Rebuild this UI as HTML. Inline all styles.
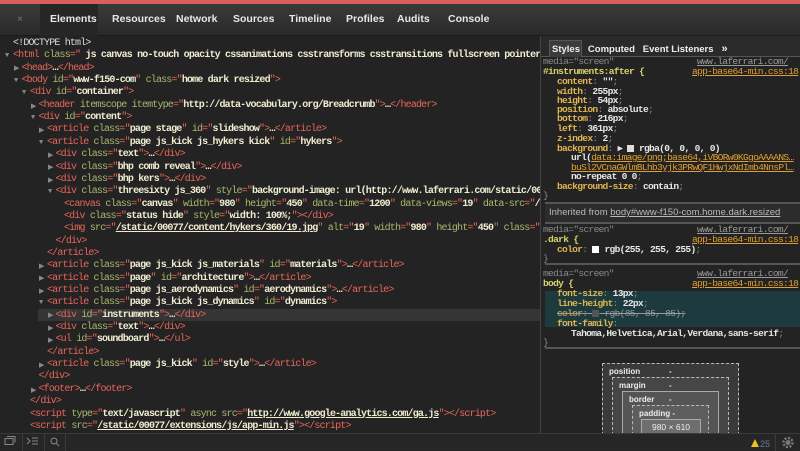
<!DOCTYPE html>
<html><head><meta charset="utf-8">
<style>
*{margin:0;padding:0;box-sizing:border-box}
body{width:800px;height:450px;overflow:hidden;background:#232323;font-family:"Liberation Sans",sans-serif;position:relative}
.red{position:absolute;left:0;top:0;width:800px;height:4px;background:#d8605c}
.tabs{position:absolute;left:0;top:4px;width:800px;height:32px;background:linear-gradient(#3a3a3a,#2a2a2a);border-bottom:1px solid #1a1a1a}
.tab{position:absolute;top:0;height:32px;line-height:30px;font-size:10.5px;color:#e8e8e8;font-weight:bold}
.tab.sel{background:#262626}
.code{position:absolute;left:0;top:36px;width:540px;height:397px;overflow:hidden;font-family:"Liberation Mono",monospace;font-size:10px;letter-spacing:-0.83px;color:#ddd}
.ln{position:absolute;white-space:pre;height:12.35px;line-height:12.35px;left:0;width:540px}
.t{color:#e8665a}.a{color:#a9b86c}.v{color:#f0ecd0;font-weight:bold}.u{color:#f0ecd0;text-decoration:underline;font-weight:bold}
.tri{position:absolute;color:#888;font-size:7px;letter-spacing:0}
.split{position:absolute;left:540px;top:36px;width:1px;height:397px;background:#444}
.rp{position:absolute;left:541px;top:36px;width:259px;height:397px;background:#232323;font-family:"Liberation Mono",monospace;font-size:9.6px;letter-spacing:-0.7px;overflow:hidden}
.rl{position:absolute;white-space:pre;line-height:9.6px;height:9.6px}
.m{color:#888}.s{color:#d6d26a;font-weight:bold}.p{color:#e0b450;font-weight:bold}.w{color:#e6e6e6;font-weight:bold}.lk{color:#e0a030;text-decoration:underline}.lg{color:#999;text-decoration:underline}
.sep{position:absolute;left:4px;width:255px;height:2px;background:#555}
.bb{position:absolute;left:0;top:433px;width:800px;height:17px;background:#262626;border-top:1px solid #3a3a3a}
.box{position:absolute;border:1px dashed #bbb;font-family:"Liberation Sans",sans-serif;font-size:8px;color:#eee;font-weight:bold;letter-spacing:0}
</style></head><body>
<div class="red"></div>
<div class="tabs">
<div class="tab" style="left:17px;color:#777;font-weight:normal">×</div>
<div class="tab sel" style="left:40px;width:58px;padding-left:10px">Elements</div>
<div class="tab" style="left:112px">Resources</div>
<div class="tab" style="left:176px">Network</div>
<div class="tab" style="left:233px">Sources</div>
<div class="tab" style="left:289px">Timeline</div>
<div class="tab" style="left:346px">Profiles</div>
<div class="tab" style="left:397px">Audits</div>
<div class="tab" style="left:448px">Console</div>
</div>

<div class="code">
<div style="position:absolute;left:38px;top:273px;width:502px;height:12.35px;background:#353535"></div>
<div class="ln" style="top:2px;left:13px"><span style="color:#ddd">&lt;!DOCTYPE html&gt;</span></div>
<div class="ln" style="top:14.35px;left:13px"><span class="t">&lt;html</span> <span class="a">class</span><span class="t">="</span><span class="v"> js canvas no-touch opacity cssanimations csstransforms csstransitions fullscreen pointere</span></div>
<div class="ln" style="top:26.7px;left:21.5px"><span class="t">&lt;head&gt;</span><span class="v">…</span><span class="t">&lt;/head&gt;</span></div>
<div class="ln" style="top:39.05px;left:21.5px"><span class="t">&lt;body</span> <span class="a">id</span><span class="t">="</span><span class="v">www-f150-com</span><span class="t">"</span> <span class="a">class</span><span class="t">="</span><span class="v">home dark resized</span><span class="t">"&gt;</span></div>
<div class="ln" style="top:51.4px;left:30px"><span class="t">&lt;div</span> <span class="a">id</span><span class="t">="</span><span class="v">container</span><span class="t">"&gt;</span></div>
<div class="ln" style="top:63.75px;left:38.5px"><span class="t">&lt;header</span> <span class="a">itemscope itemtype</span><span class="t">="</span><span class="v">http://data-vocabulary.org/Breadcrumb</span><span class="t">"&gt;</span><span class="v">…</span><span class="t">&lt;/header&gt;</span></div>
<div class="ln" style="top:76.1px;left:38.5px"><span class="t">&lt;div</span> <span class="a">id</span><span class="t">="</span><span class="v">content</span><span class="t">"&gt;</span></div>
<div class="ln" style="top:88.45px;left:47px"><span class="t">&lt;article</span> <span class="a">class</span><span class="t">="</span><span class="v">page stage</span><span class="t">"</span> <span class="a">id</span><span class="t">="</span><span class="v">slideshow</span><span class="t">"&gt;</span><span class="v">…</span><span class="t">&lt;/article&gt;</span></div>
<div class="ln" style="top:100.8px;left:47px"><span class="t">&lt;article</span> <span class="a">class</span><span class="t">="</span><span class="v">page js_kick js_hykers kick</span><span class="t">"</span> <span class="a">id</span><span class="t">="</span><span class="v">hykers</span><span class="t">"&gt;</span></div>
<div class="ln" style="top:113.15px;left:55.5px"><span class="t">&lt;div</span> <span class="a">class</span><span class="t">="</span><span class="v">text</span><span class="t">"&gt;</span><span class="v">…</span><span class="t">&lt;/div&gt;</span></div>
<div class="ln" style="top:125.5px;left:55.5px"><span class="t">&lt;div</span> <span class="a">class</span><span class="t">="</span><span class="v">bhp comb reveal</span><span class="t">"&gt;</span><span class="v">…</span><span class="t">&lt;/div&gt;</span></div>
<div class="ln" style="top:137.85px;left:55.5px"><span class="t">&lt;div</span> <span class="a">class</span><span class="t">="</span><span class="v">bhp kers</span><span class="t">"&gt;</span><span class="v">…</span><span class="t">&lt;/div&gt;</span></div>
<div class="ln" style="top:150.2px;left:55.5px"><span class="t">&lt;div</span> <span class="a">class</span><span class="t">="</span><span class="v">threesixty js_360</span><span class="t">"</span> <span class="a">style</span><span class="t">="</span><span class="v">background-image: url(http://www.laferrari.com/static/000</span></div>
<div class="ln" style="top:162.55px;left:64px"><span class="t">&lt;canvas</span> <span class="a">class</span><span class="t">="</span><span class="v">canvas</span><span class="t">"</span> <span class="a">width</span><span class="t">="</span><span class="v">980</span><span class="t">"</span> <span class="a">height</span><span class="t">="</span><span class="v">450</span><span class="t">"</span> <span class="a">data-time</span><span class="t">="</span><span class="v">1200</span><span class="t">"</span> <span class="a">data-views</span><span class="t">="</span><span class="v">19</span><span class="t">"</span> <span class="a">data-src</span><span class="t">="</span><span class="v">/s</span></div>
<div class="ln" style="top:174.9px;left:64px"><span class="t">&lt;div</span> <span class="a">class</span><span class="t">="</span><span class="v">status hide</span><span class="t">"</span> <span class="a">style</span><span class="t">="</span><span class="v">width: 100%;</span><span class="t">"&gt;&lt;/div&gt;</span></div>
<div class="ln" style="top:187.25px;left:64px"><span class="t">&lt;img</span> <span class="a">src</span><span class="t">="</span><span class="u">/static/00077/content/hykers/360/19.jpg</span><span class="t">"</span> <span class="a">alt</span><span class="t">="</span><span class="v">19</span><span class="t">"</span> <span class="a">width</span><span class="t">="</span><span class="v">980</span><span class="t">"</span> <span class="a">height</span><span class="t">="</span><span class="v">450</span><span class="t">"</span> <span class="a">class</span><span class="t">="</span><span class="v">h</span></div>
<div class="ln" style="top:199.6px;left:55.5px"><span class="t">&lt;/div&gt;</span></div>
<div class="ln" style="top:211.95px;left:47px"><span class="t">&lt;/article&gt;</span></div>
<div class="ln" style="top:224.3px;left:47px"><span class="t">&lt;article</span> <span class="a">class</span><span class="t">="</span><span class="v">page js_kick js_materials</span><span class="t">"</span> <span class="a">id</span><span class="t">="</span><span class="v">materials</span><span class="t">"&gt;</span><span class="v">…</span><span class="t">&lt;/article&gt;</span></div>
<div class="ln" style="top:236.65px;left:47px"><span class="t">&lt;article</span> <span class="a">class</span><span class="t">="</span><span class="v">page</span><span class="t">"</span> <span class="a">id</span><span class="t">="</span><span class="v">architecture</span><span class="t">"&gt;</span><span class="v">…</span><span class="t">&lt;/article&gt;</span></div>
<div class="ln" style="top:249px;left:47px"><span class="t">&lt;article</span> <span class="a">class</span><span class="t">="</span><span class="v">page js_aerodynamics</span><span class="t">"</span> <span class="a">id</span><span class="t">="</span><span class="v">aerodynamics</span><span class="t">"&gt;</span><span class="v">…</span><span class="t">&lt;/article&gt;</span></div>
<div class="ln" style="top:261.35px;left:47px"><span class="t">&lt;article</span> <span class="a">class</span><span class="t">="</span><span class="v">page js_kick js_dynamics</span><span class="t">"</span> <span class="a">id</span><span class="t">="</span><span class="v">dynamics</span><span class="t">"&gt;</span></div>
<div class="ln" style="top:273.7px;left:55.5px"><span class="t">&lt;div</span> <span class="a">id</span><span class="t">="</span><span class="v">instruments</span><span class="t">"&gt;</span><span class="v">…</span><span class="t">&lt;/div&gt;</span></div>
<div class="ln" style="top:286.05px;left:55.5px"><span class="t">&lt;div</span> <span class="a">class</span><span class="t">="</span><span class="v">text</span><span class="t">"&gt;</span><span class="v">…</span><span class="t">&lt;/div&gt;</span></div>
<div class="ln" style="top:298.4px;left:55.5px"><span class="t">&lt;ul</span> <span class="a">id</span><span class="t">="</span><span class="v">soundboard</span><span class="t">"&gt;</span><span class="v">…</span><span class="t">&lt;/ul&gt;</span></div>
<div class="ln" style="top:310.75px;left:47px"><span class="t">&lt;/article&gt;</span></div>
<div class="ln" style="top:323.1px;left:47px"><span class="t">&lt;article</span> <span class="a">class</span><span class="t">="</span><span class="v">page js_kick</span><span class="t">"</span> <span class="a">id</span><span class="t">="</span><span class="v">style</span><span class="t">"&gt;</span><span class="v">…</span><span class="t">&lt;/article&gt;</span></div>
<div class="ln" style="top:335.45px;left:38.5px"><span class="t">&lt;/div&gt;</span></div>
<div class="ln" style="top:347.8px;left:38.5px"><span class="t">&lt;footer&gt;</span><span class="v">…</span><span class="t">&lt;/footer&gt;</span></div>
<div class="ln" style="top:360.15px;left:30px"><span class="t">&lt;/div&gt;</span></div>
<div class="ln" style="top:372.5px;left:30px"><span class="t">&lt;script</span> <span class="a">type</span><span class="t">="</span><span class="v">text/javascript</span><span class="t">"</span> <span class="a">async src</span><span class="t">="</span><span class="u">http://www.google-analytics.com/ga.js</span><span class="t">"&gt;&lt;/script&gt;</span></div>
<div class="ln" style="top:384.85px;left:30px"><span class="t">&lt;script</span> <span class="a">src</span><span class="t">="</span><span class="u">/static/00077/extensions/js/app-min.js</span><span class="t">"&gt;&lt;/script&gt;</span></div>
<div class="tri" style="left:5px;top:16px">▼</div>
<div class="tri" style="left:14px;top:28px">▶</div>
<div class="tri" style="left:14px;top:41px">▼</div>
<div class="tri" style="left:22px;top:53px">▼</div>
<div class="tri" style="left:31px;top:66px">▶</div>
<div class="tri" style="left:31px;top:78px">▼</div>
<div class="tri" style="left:39px;top:90px">▶</div>
<div class="tri" style="left:39px;top:103px">▼</div>
<div class="tri" style="left:48px;top:115px">▶</div>
<div class="tri" style="left:48px;top:127px">▶</div>
<div class="tri" style="left:48px;top:140px">▶</div>
<div class="tri" style="left:48px;top:152px">▼</div>
<div class="tri" style="left:39px;top:226px">▶</div>
<div class="tri" style="left:39px;top:238px">▶</div>
<div class="tri" style="left:39px;top:251px">▶</div>
<div class="tri" style="left:39px;top:263px">▼</div>
<div class="tri" style="left:48px;top:275px">▶</div>
<div class="tri" style="left:48px;top:288px">▶</div>
<div class="tri" style="left:48px;top:300px">▶</div>
<div class="tri" style="left:39px;top:325px">▶</div>
<div class="tri" style="left:31px;top:350px">▶</div>
</div>
<div class="split"></div>

<div class="rp">
<div style="position:absolute;left:0;top:0;width:259px;height:21px;background:#2a2a2a;border-bottom:1px solid #555"></div>
<div style="position:absolute;left:8px;top:4px;width:33px;height:17px;background:#3c3c3c;border:1px solid #555;border-bottom:none"></div>
<div style="position:absolute;left:11px;top:7px;font-family:'Liberation Sans',sans-serif;font-size:9.5px;letter-spacing:0;color:#eee;font-weight:bold;white-space:pre">Styles   Computed   Event Listeners   <span style="font-size:11px">»</span></div>

<div class="rl m" style="left:2px;top:21px">media="screen"</div>
<div class="rl lg" style="left:156px;top:21px">www.laferrari.com/</div>
<div class="rl s" style="left:2px;top:31px">#instruments:after {</div>
<div class="rl lk" style="left:151px;top:31px">app-base64-min.css:18</div>
<div class="rl" style="left:16px;top:41px"><span class="p">content</span><span class="m">: </span><span class="w">""</span><span class="m">;</span></div>
<div class="rl" style="left:16px;top:51px"><span class="p">width</span><span class="m">: </span><span class="w">255px</span><span class="m">;</span></div>
<div class="rl" style="left:16px;top:60px"><span class="p">height</span><span class="m">: </span><span class="w">54px</span><span class="m">;</span></div>
<div class="rl" style="left:16px;top:69px"><span class="p">position</span><span class="m">: </span><span class="w">absolute</span><span class="m">;</span></div>
<div class="rl" style="left:16px;top:78px"><span class="p">bottom</span><span class="m">: </span><span class="w">216px</span><span class="m">;</span></div>
<div class="rl" style="left:16px;top:88px"><span class="p">left</span><span class="m">: </span><span class="w">361px</span><span class="m">;</span></div>
<div class="rl" style="left:16px;top:98px"><span class="p">z-index</span><span class="m">: </span><span class="w">2</span><span class="m">;</span></div>
<div class="rl" style="left:16px;top:108px"><span class="p">background</span><span class="m">: </span><span class="w">▸ <span style="display:inline-block;width:7px;height:7px;background:#ddd;vertical-align:-1px"></span> rgba(0, 0, 0, 0)</span></div>
<div class="rl" style="left:30px;top:117px"><span class="w">url(</span><span class="lk">data:image/png;base64,iVBORw0KGgoAAAANS…</span></div>
<div class="rl" style="left:30px;top:127px"><span class="lk">buSl2VCnaGWlmBLhb3yjk3PRwQF1HwjxNdImb4NnsPl…</span></div>
<div class="rl" style="left:30px;top:136px"><span class="w">no-repeat 0 0</span><span class="m">;</span></div>
<div class="rl" style="left:16px;top:146px"><span class="p">background-size</span><span class="m">: </span><span class="w">contain</span><span class="m">;</span></div>
<div class="rl m" style="left:2px;top:155px">}</div>
<div class="sep" style="top:166px"></div>
<div style="position:absolute;left:4px;top:168px;width:255px;height:18px;background:#2c2c2c;font-family:'Liberation Sans',sans-serif;font-size:9.5px;letter-spacing:0;color:#bbb;line-height:18px;padding-left:4px">Inherited from <span style="text-decoration:underline">body#www-f150-com.home.dark.resized</span></div>
<div class="sep" style="top:186px"></div>

<div class="rl m" style="left:2px;top:189px">media="screen"</div>
<div class="rl lg" style="left:156px;top:189px">www.laferrari.com/</div>
<div class="rl s" style="left:2px;top:199px">.dark {</div>
<div class="rl lk" style="left:151px;top:199px">app-base64-min.css:18</div>
<div class="rl" style="left:16px;top:209px"><span class="p">color</span><span class="m">: </span><span class="w"><span style="display:inline-block;width:7px;height:7px;background:#fff;vertical-align:-1px"></span> rgb(255, 255, 255)</span><span class="m">;</span></div>
<div class="rl m" style="left:2px;top:218px">}</div>
<div class="sep" style="top:227px"></div>

<div style="position:absolute;left:4px;top:255px;width:255px;height:36px;background:#1d3a3e"></div>
<div class="rl m" style="left:2px;top:233px">media="screen"</div>
<div class="rl lg" style="left:156px;top:233px">www.laferrari.com/</div>
<div class="rl s" style="left:2px;top:243px">body {</div>
<div class="rl lk" style="left:151px;top:243px">app-base64-min.css:18</div>
<div class="rl" style="left:16px;top:253px"><span class="p">font-size</span><span class="m">: </span><span class="w">13px</span><span class="m">;</span></div>
<div class="rl" style="left:16px;top:263px"><span class="p">line-height</span><span class="m">: </span><span class="w">22px</span><span class="m">;</span></div>
<div class="rl" style="left:16px;top:273px;text-decoration:line-through;color:#999"><span class="p" style="color:#b09050">color</span>: <span style="display:inline-block;width:7px;height:7px;background:#555;vertical-align:-1px"></span> rgb(85, 85, 85);</div>
<div class="rl" style="left:16px;top:283px"><span class="p">font-family</span><span class="m">:</span></div>
<div class="rl" style="left:30px;top:293px"><span class="w">Tahoma,Helvetica,Arial,Verdana,sans-serif</span><span class="m">;</span></div>
<div class="rl m" style="left:2px;top:302px">}</div>
<div class="sep" style="top:311px"></div>

<div class="box" style="left:61px;top:327px;width:137px;height:72px;background:#3a3a3a;border-bottom:none"><span style="position:absolute;left:6px;top:3px">position</span><span style="position:absolute;left:66px;top:3px">-</span></div>
<div class="box" style="left:71px;top:341px;width:117px;height:58px;background:#464646;border-bottom:none"><span style="position:absolute;left:6px;top:3px">margin</span><span style="position:absolute;left:56px;top:3px">-</span></div>
<div class="box" style="left:81px;top:355px;width:97px;height:44px;background:#555;border:1px solid #aaa;border-bottom:none"><span style="position:absolute;left:6px;top:3px">border</span><span style="position:absolute;left:46px;top:3px">-</span></div>
<div class="box" style="left:91px;top:369px;width:77px;height:30px;background:#5e5e5e;border-bottom:none"><span style="position:absolute;left:6px;top:3px">padding -</span></div>
<div style="position:absolute;left:100px;top:383px;width:60px;height:16px;background:#6e6e6e;border:1px solid #aaa;border-bottom:none;font-size:8.5px;letter-spacing:0;color:#eee;text-align:center;line-height:14px;font-family:'Liberation Sans',sans-serif">980 × 610</div>
</div>

<div class="bb">
<svg width="800" height="17" style="position:absolute;left:0;top:0">
<g stroke="#888" fill="none" stroke-width="1">
<rect x="5" y="4.5" width="8" height="6"/><path d="M7 2.5h8v6"/>
<line x1="22.5" y1="0" x2="22.5" y2="17" stroke="#3a3a3a"/>
<path d="M27 4l3 3-3 3M32 4h6M32 7h6M32 10h6"/>
<line x1="44.5" y1="0" x2="44.5" y2="17" stroke="#3a3a3a"/>
<circle cx="54" cy="7" r="3"/><path d="M56 9l3 3"/>
<line x1="65.5" y1="0" x2="65.5" y2="17" stroke="#3a3a3a"/>
<line x1="775.5" y1="0" x2="775.5" y2="17" stroke="#3a3a3a"/>
</g>
<path d="M751 13l4-8 4 8z" fill="#f0c020"/>
<text x="760" y="13" font-family="Liberation Sans" font-size="9" fill="#6a7aa0">25</text>
<circle cx="788" cy="8.5" r="4.5" fill="none" stroke="#777" stroke-width="2.5" stroke-dasharray="2 1.5"/>
<circle cx="788" cy="8.5" r="2.5" fill="#777"/>
</svg>
</div>
</body></html>
